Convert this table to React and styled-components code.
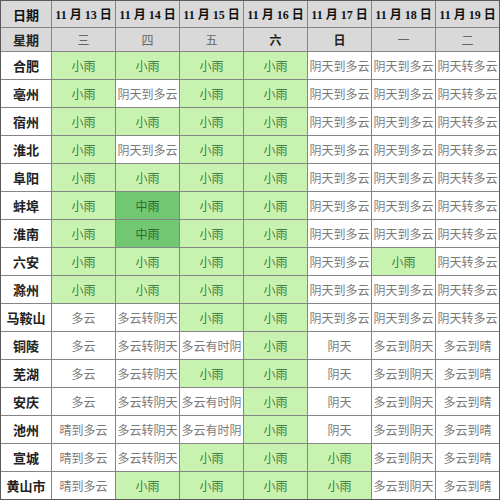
import styled, { createGlobalStyle } from "styled-components";

const dates = ["13", "14", "15", "16", "17", "18", "19"];
const weekdays = [
  { text: "三" },
  { text: "四" },
  { text: "五" },
  { text: "六", bold: true },
  { text: "日", bold: true },
  { text: "一" },
  { text: "二" },
];

// g = 小雨 (light green), m = 中雨 (dark green), anything else = plain
const rows = [
  ["合肥", ["g", "g", "g", "g", "阴天到多云", "阴天到多云", "阴天转多云"]],
  ["亳州", ["g", "阴天到多云", "g", "g", "阴天到多云", "阴天到多云", "阴天转多云"]],
  ["宿州", ["g", "g", "g", "g", "阴天到多云", "阴天到多云", "阴天转多云"]],
  ["淮北", ["g", "阴天到多云", "g", "g", "阴天到多云", "阴天到多云", "阴天转多云"]],
  ["阜阳", ["g", "g", "g", "g", "阴天到多云", "阴天到多云", "阴天转多云"]],
  ["蚌埠", ["g", "m", "g", "g", "阴天到多云", "阴天到多云", "阴天转多云"]],
  ["淮南", ["g", "m", "g", "g", "阴天到多云", "阴天到多云", "阴天转多云"]],
  ["六安", ["g", "g", "g", "g", "阴天到多云", "g", "阴天转多云"]],
  ["滁州", ["g", "g", "g", "g", "阴天到多云", "阴天到多云", "阴天转多云"]],
  ["马鞍山", ["多云", "多云转阴天", "g", "g", "阴天到多云", "阴天到多云", "阴天转多云"]],
  ["铜陵", ["多云", "多云转阴天", "多云有时阴", "g", "阴天", "多云到阴天", "多云到晴"]],
  ["芜湖", ["多云", "多云转阴天", "g", "g", "阴天", "多云到阴天", "多云到晴"]],
  ["安庆", ["多云", "多云转阴天", "多云有时阴", "g", "阴天", "多云到阴天", "多云到晴"]],
  ["池州", ["晴到多云", "多云转阴天", "多云有时阴", "g", "阴天", "多云到阴天", "多云到晴"]],
  ["宣城", ["晴到多云", "多云转阴天", "g", "g", "g", "多云到阴天", "多云到晴"]],
  ["黄山市", ["晴到多云", "g", "g", "g", "g", "多云到阴天", "多云到晴"]],
];

const GlobalStyle = createGlobalStyle`
  body {
    margin: 0;
    background: #fff;
  }
`;

const App = () => {
  return (
    <>
      <GlobalStyle />
      <Grid>
        <HeadCell first>日期</HeadCell>
        {dates.map((d) => (
          <HeadCell key={d}>{`11 月 ${d} 日`}</HeadCell>
        ))}
        <WeekCell bold first>星期</WeekCell>
        {weekdays.map((w, i) => (
          <WeekCell key={i} bold={w.bold}>
            {w.text}
          </WeekCell>
        ))}
        {rows.map(([city, cells]) => (
          <Row key={city}>
            <CityCell>{city}</CityCell>
            {cells.map((c, i) =>
              c === "g" ? (
                <Cell key={i} kind="light">小雨</Cell>
              ) : c === "m" ? (
                <Cell key={i} kind="dark">中雨</Cell>
              ) : (
                <Cell key={i}>{c}</Cell>
              )
            )}
          </Row>
        ))}
      </Grid>
    </>
  );
};

export default App;

const Grid = styled.div`
  display: grid;
  grid-template-columns: 50px repeat(7, 63px);
  grid-template-rows: 26px 23px repeat(16, 27px);
  gap: 1px;
  width: max-content;
  background: #858585;
  border: 1px solid #5a5a5a;
  font-family: "Liberation Serif", "Noto Sans CJK SC", serif;
  font-size: 12px;
`;

const Row = styled.div`
  display: contents;
`;

const BaseCell = styled.div`
  display: flex;
  align-items: center;
  justify-content: center;
  white-space: nowrap;
  overflow: hidden;
`;

const HeadCell = styled(BaseCell)`
  background: #d9d9d9;
  color: #111;
  font-weight: bold;
  font-size: ${(props) => (props.first ? "13px" : "12px")};
`;

const WeekCell = styled(BaseCell)`
  background: #d9d9d9;
  color: ${(props) => (props.bold ? "#222" : "#666")};
  font-weight: ${(props) => (props.bold ? "bold" : "normal")};
  font-size: ${(props) => (props.first ? "13px" : "12px")};
`;

const CityCell = styled(BaseCell)`
  background: #fff;
  color: #222;
  font-weight: bold;
  font-size: 13px;
`;

const Cell = styled(BaseCell)`
  background: ${(props) =>
    props.kind === "light" ? "#c8f2b0" : props.kind === "dark" ? "#72c872" : "#fff"};
  color: ${(props) =>
    props.kind === "light" ? "#3f7f3f" : props.kind === "dark" ? "#2e6a2e" : "#7a7a7a"};
`;
